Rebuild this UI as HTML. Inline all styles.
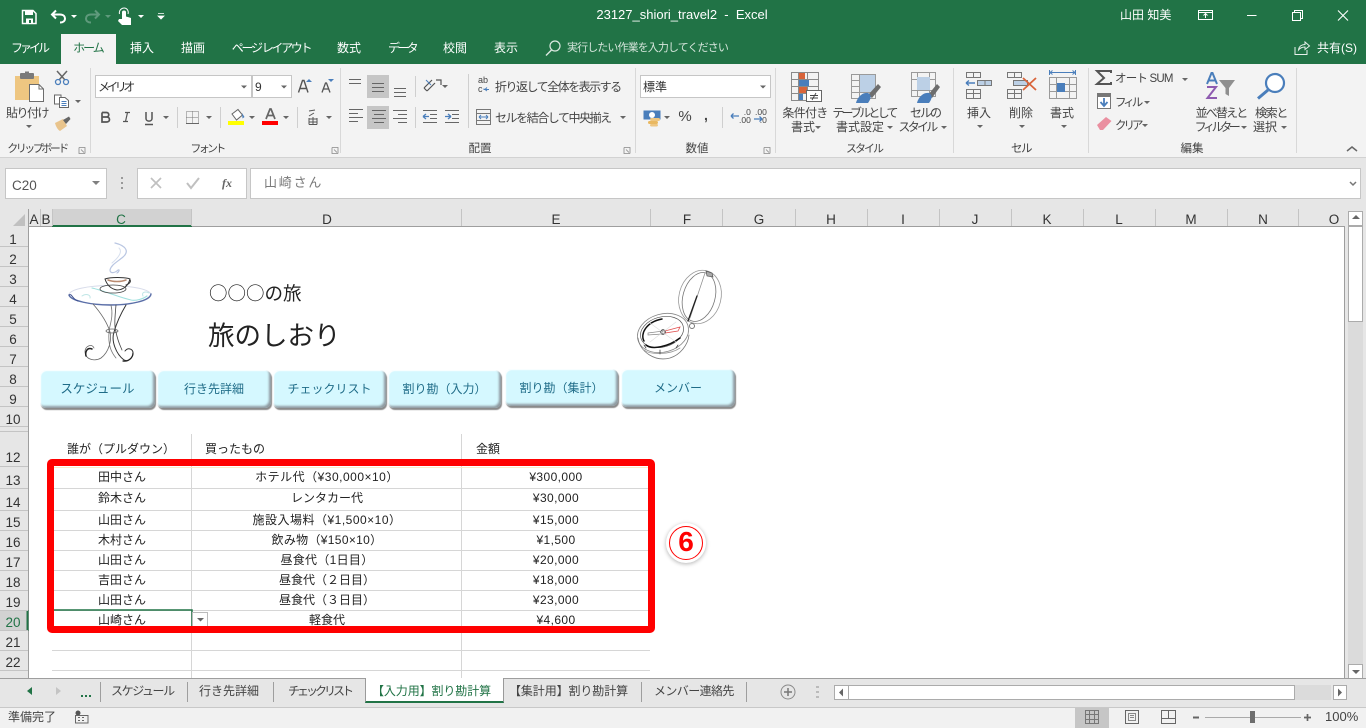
<!DOCTYPE html>
<html lang="ja"><head><meta charset="utf-8"><title>23127_shiori_travel2 - Excel</title>
<style>
html,body{margin:0;padding:0;width:1366px;height:728px;overflow:hidden;background:#fff}
body{position:relative;font-family:"Liberation Sans","Noto Sans CJK JP",sans-serif;font-size:12px;color:#444}
div{position:absolute;box-sizing:border-box}
.t{position:absolute;white-space:nowrap;line-height:16px;height:16px}
.c{position:absolute;white-space:nowrap;line-height:16px;height:16px;width:240px;margin-left:-120px;text-align:center}
.w{color:#fff}
.g{color:#444}
.d{color:#222}
.n{letter-spacing:.4px}
.h{font-size:13.5px;color:#333;font-family:"Liberation Sans",sans-serif}
.rb{background:#d5f8ff;border-radius:6px;color:#1f6c88;font-size:12.5px;text-align:center;line-height:38px;
box-shadow:inset 1px 1px 1px #fff,inset -2px -2px 2px #8f9aa0,1px 2px 1px #8a8a8a;}
.btn{border:1px solid #c6c6c6;background:#fff}
</style></head><body>

<!-- backgrounds -->
<div style="left:0;top:0;width:1366px;height:64px;background:#217346"></div>
<div style="left:61px;top:34px;width:55px;height:30px;background:#f3f3f3"></div>
<div style="left:0;top:64px;width:1366px;height:93px;background:#f3f3f3"></div>
<div style="left:0;top:157px;width:1366px;height:52px;background:#e6e6e6;border-top:1px solid #d2d2d2"></div>
<div class="btn" style="left:5px;top:168px;width:102px;height:31px"></div>
<div class="btn" style="left:137px;top:168px;width:110px;height:31px"></div>
<div class="btn" style="left:250px;top:168px;width:1111px;height:31px"></div>

<!-- sheet chrome -->
<div style="left:0;top:209px;width:1366px;height:18px;background:#e6e6e6"></div>
<div style="left:0;top:209px;width:29px;height:470px;background:#e6e6e6"></div>
<div style="left:1345px;top:209px;width:21px;height:470px;background:#e6e6e6"></div>
<div style="left:52px;top:209px;width:140px;height:18px;background:#d2d2d2"></div>
<div style="left:0;top:610px;width:28px;height:21px;background:#d2d2d2"></div>
<div style="left:0;top:678px;width:1366px;height:30px;background:#e6e6e6"></div>
<div style="left:0;top:708px;width:1366px;height:20px;background:#f1f1f1"></div>
<div style="left:1075px;top:707px;width:34px;height:21px;background:#c6c6c6"></div>

<!-- inputs in ribbon -->
<div style="left:95px;top:75px;width:157px;height:23px;background:#fff;border:1px solid #c6c6c6"></div>
<div style="left:252px;top:75px;width:40px;height:23px;background:#fff;border:1px solid #c6c6c6"></div>
<div style="left:640px;top:75px;width:131px;height:23px;background:#fff;border:1px solid #c6c6c6"></div>
<div style="left:367px;top:75px;width:22px;height:23px;background:#c6c6c6"></div>
<div style="left:367px;top:106px;width:22px;height:23px;background:#c6c6c6"></div>

<!-- scrollbars -->
<div style="left:1348px;top:211px;width:15px;height:467px;background:#dbdbdb"></div>
<div class="btn" style="left:1348px;top:211px;width:15px;height:15px;border-color:#ababab"></div>
<div class="btn" style="left:1348px;top:226px;width:15px;height:96px;border-color:#ababab"></div>
<div class="btn" style="left:1348px;top:664px;width:15px;height:15px;border-color:#ababab"></div>
<div style="left:849px;top:685px;width:482px;height:15px;background:#dbdbdb"></div>
<div class="btn" style="left:834px;top:685px;width:15px;height:15px;border-color:#ababab"></div>
<div class="btn" style="left:848px;top:685px;width:447px;height:15px;border-color:#ababab"></div>
<div class="btn" style="left:1333px;top:685px;width:14px;height:15px;border-color:#ababab"></div>

<!-- active sheet tab -->
<div style="left:365px;top:678px;width:139px;height:25px;background:#fff;border:1px solid #9a9a9a;border-top:0;border-bottom:2px solid #217346"></div>

<!-- main svg -->
<svg width="1366" height="728" viewBox="0 0 1366 728" style="position:absolute;left:0;top:0" fill="none">
<!-- header edges -->
<path d="M29 226.5H1345M28.5 209V679M1344.5 226V679M0 678.5H365M504 678.5H1366" stroke="#9e9e9e"/>
<path d="M0 707.5H1366" stroke="#c8c8c8"/>
<path d="M52 226H192" stroke="#217346" stroke-width="2"/>
<path d="M27.5 610V631" stroke="#217346" stroke-width="2"/>
<path d="M40.5 209V226M52.5 209V226M191.5 209V226M461.5 209V226M650.5 209V226M722.5 209V226M795.5 209V226M867.5 209V226M939.5 209V226M1011.5 209V226M1083.5 209V226M1155.5 209V226M1227.5 209V226M1298.5 209V226" stroke="#c4c4c4"/>
<path d="M25 214V226H13z" fill="#c0c0c0"/>
<path d="M0 246.5H28M0 266.5H28M0 286.5H28M0 306.5H28M0 326.5H28M0 346.5H28M0 366.5H28M0 386.5H28M0 406.5H28M0 426.5H28M0 431.5H28M0 466.5H28M0 488.5H28M0 510.5H28M0 530.5H28M0 550.5H28M0 570.5H28M0 590.5H28M0 610.5H28M0 630.5H28M0 650.5H28M0 670.5H28" stroke="#c4c4c4"/>
<!-- grid -->
<path d="M52 488.5H650M52 510.5H650M52 530.5H650M52 550.5H650M52 570.5H650M52 590.5H650M52 610.5H650M52 630.5H650M52 650.5H650M52 670.5H650" stroke="#d6d6d6"/>
<path d="M191.5 434V678M461.5 434V678" stroke="#d6d6d6"/>
<path d="M52 467.5H650" stroke="#fde9c9"/>
<path d="M52 610H192V631M52 610" stroke="#217346" stroke-width="1.5"/>
<rect x="192.500" y="612.500" width="15" height="14" fill="#fff" stroke="#bbb"/>
<path d="M197 618h7l-3.500 3.500z" fill="#666"/>

<!-- ribbon group separators -->
<path d="M90.500 68V153M340.500 68V153M635.500 68V153M775.500 68V153M953.500 68V153M1088.500 68V153M1296.500 68V153" stroke="#d8d8d8"/>
<path d="M177.500 107V128M220.500 107V128M297.500 107V128M415.500 76V97M415.500 107V128M468.500 74V128M722.500 107V128" stroke="#cfcfcf"/>
<path d="M0 157.500H1366" stroke="#d2d2d2"/>

<!-- dropdown triangles -->
<path d="M71 15h6l-3 3zM138 15h6l-3 3z" fill="#fff"/>
<path d="M105 15h6l-3 3z" fill="#5f9a7c"/>
<path d="M241 85.500h6l-3 3zM281 85.500h6l-3 3zM26 125h6l-3 3zM75 100h6l-3 3zM163 116h6l-3 3zM206 116h6l-3 3zM249 116h6l-3 3zM283 116h6l-3 3zM326 116h6l-3 3zM442 85h6l-3 3zM620 116h6l-3 3zM760 85.500h6l-3 3zM664 116h6l-3 3zM815 126h6l-3 3zM887 126h6l-3 3zM941 126h6l-3 3zM977 125h6l-3 3zM1019 125h6l-3 3zM1061 125h6l-3 3zM1182 78h6l-3 3zM1144 101h6l-3 3zM1142 124h6l-3 3zM1241 126h6l-3 3zM1281 126h6l-3 3z" fill="#666"/>
<path d="M92 181h8l-4 4z" fill="#808080"/>

<!-- quick access -->
<path d="M22.500 10.500H33L36 13.500V23.500H22.500Z" stroke="#fff" stroke-width="1.500"/>
<rect x="25" y="11" width="8" height="4" fill="#fff"/><rect x="26" y="18.500" width="7" height="5" fill="#fff"/><rect x="29" y="20" width="2" height="3" fill="#217346"/>
<path d="M56 10.500L52 14.500L56 18.500M52.500 14.500H60C64 14.500 65 17 65 18.500C65 21 63 22.500 60 22.500" stroke="#fff" stroke-width="2"/>
<path d="M95 10.500L99 14.500L95 18.500M98.500 14.500H91C87 14.500 86 17 86 18.500C86 21 88 22.500 91 22.500" stroke="#5f9a7c" stroke-width="2"/>
<path d="M122 12V19L119 19L118 21L122 25H131V18L126 16.500V12C126 10 122 10 122 12Z" fill="#fff"/><path d="M119.500 14C118.500 10 122 8 124 8C127 8 129 11 128 14" stroke="#fff"/>
<path d="M158 13.500h6M158 16h6l-3 3z" stroke="#fff" stroke-width=".8" fill="#fff"/>
<!-- window controls -->
<path d="M1198.500 10.500H1212.500V19.500H1198.500ZM1198.500 12.500H1212.500M1205.500 18V14M1203.500 15.500L1205.500 13.500L1207.500 15.500" stroke="#fff"/>
<path d="M1247 15.500H1256.500" stroke="#fff"/>
<path d="M1292.500 12.500H1300.500V20.500H1292.500ZM1294.500 12V10.500H1302.500V18.500H1301" stroke="#fff"/>
<path d="M1338 10.500L1348 20.500M1348 10.500L1338 20.500" stroke="#fff" stroke-width="1.100"/>
<!-- tell me / share -->
<circle cx="555" cy="46" r="5" stroke="#dbe8e0" stroke-width="1.200"/><path d="M551.500 50L546 55.500" stroke="#dbe8e0" stroke-width="1.400"/>
<path d="M1295 47V54.500H1307V50M1298.500 50C1299 46 1302 44.500 1305 44.500V42L1309.500 46L1305 49.500V47C1302 47 1300 48 1298.500 50Z" stroke="#e8f0ec"/>

<!-- clipboard -->
<path d="M15 76H39V100H15Z" fill="#eec681"/><rect x="20" y="73" width="14" height="6" rx="1" fill="#7a7a7a"/><rect x="25" y="71.500" width="4" height="3" fill="#7a7a7a"/>
<path d="M29.500 84.500H39L43.500 89V101.500H29.500Z" fill="#fff" stroke="#6d6d6d"/>
<path d="M39 85V89H43.500" stroke="#6d6d6d"/>
<path d="M57 71L65 80M67 71L59 80" stroke="#666" stroke-width="1.500"/><circle cx="58" cy="82" r="2.500" stroke="#4a7ebb" stroke-width="1.300"/><circle cx="66" cy="82" r="2.500" stroke="#4a7ebb" stroke-width="1.300"/>
<path d="M54.500 95H61V104H54.500Z" fill="#fff" stroke="#666"/><path d="M59.500 97.500H65L68.500 100.500V107.500H59.500Z" fill="#fff" stroke="#666"/><path d="M61.500 101.500H66.500M61.500 103.500H66.500M61.500 105.500H66.500" stroke="#4a7ebb"/>
<path d="M55 123L63 119L67 126L60 131C58 130 56 127 55 123Z" fill="#e9c48c"/><path d="M63 120L69 116.500L70.500 119L66 124Z" fill="#666"/>

<!-- font group -->
<path d="M298.500 92.500L302.500 80.500H304L308 92.500M300 88.500H306.500" stroke="#555" stroke-width="1.400"/><path d="M306 82h6l-3-3z" fill="#4a7ebb"/>
<path d="M322 92.500L325.500 83H326.500L330 92.500M323.500 89H328.500" stroke="#555" stroke-width="1.300"/><path d="M328 79h6l-3 3z" fill="#4a7ebb"/>
<path d="M102 112.500H106.500C109.500 112.500 109.500 117 106.500 117H102.500M106.500 117C110.500 117 110.500 122 106.500 122H102V112.500" stroke="#555" stroke-width="1.700"/>
<path d="M125 112.500H130M127.500 112.500L125.500 121.500M123 121.500H128" stroke="#555" stroke-width="1.200"/>
<path d="M146 112V118.500C146 122 152 122 152 118.500V112M145 124.500H153" stroke="#555" stroke-width="1.500"/>
<path d="M186.500 111.500H198.500V123.500H186.500ZM192.500 111.500V123.500M186.500 117.500H198.500" stroke="#777" stroke-dasharray="1 1"/><path d="M186 123.500H199" stroke="#666"/>
<path d="M232 114L238 109.500L242.500 115L236.500 120Z" fill="#fff" stroke="#666"/><path d="M242 113L244.500 117L242.500 118.500Z" fill="#4a7ebb"/>
<rect x="228" y="121" width="16" height="4" fill="#ffff00"/>
<path d="M266 119L270 109H271L275 119M267.500 115.500H273.500" stroke="#666" stroke-width="1.700"/>
<rect x="262" y="121" width="16" height="4" fill="#f00"/>
<path d="M309 111L315 110M314 113L309 116M313 117V124.500M309 119H317M309 122H317M309 124.500H317M309 118V124.500M317 118V124.500" stroke="#555"/>

<!-- alignment -->
<path d="M349 79.500H361M349 83.500H361M372 83.500H384M372 87.500H384M372 91.500H384M394 88.500H406M394 92.500H406M394 96.500H406" stroke="#666"/>
<path d="M349 109.500H363M349 113.500H358M349 117.500H363M349 121.500H358M372 110.500H386M374 114.500H384M372 118.500H386M374 122.500H384M393 110.500H407M398 114.500H407M393 118.500H407M398 122.500H407" stroke="#666"/>
<path d="M424 88L432 80M427 91L435 83M424 88L427 91M436 80L441 80V85" stroke="#555" stroke-width="1.200"/><path d="M426 80L431 85" stroke="#4a7ebb"/>
<path d="M423 110.500H437M430 114.500H437M430 118.500H437M423 122.500H437" stroke="#666"/><path d="M423 116.500H429M423 116.500L426 114M423 116.500L426 119" stroke="#4a7ebb" stroke-width="1.300"/>
<path d="M445 110.500H459M452 114.500H459M452 118.500H459M445 122.500H459" stroke="#666"/><path d="M445 116.500H451M451 116.500L448 114M451 116.500L448 119" stroke="#4a7ebb" stroke-width="1.300"/>
<path d="M476.500 109.500H490.500V124.500H476.500ZM476.500 113.500H490.500M476.500 120.500H490.500" stroke="#777"/><path d="M479 117H488M479 117L481 115M479 117L481 119M488 117L486 115M488 117L486 119" stroke="#4a7ebb"/>
<path d="M484 89.500V90.500H489M487 88.500L485 90.500L487 92" stroke="#4a7ebb" transform="translate(0,-1)"/>

<!-- number -->
<path d="M643.500 110.500H660.500V119.500H643.500Z" fill="#4a7ebb"/><circle cx="652" cy="115" r="3" fill="#fff"/>
<rect x="650" y="118" width="10" height="3" rx="1.500" fill="#eec681"/><rect x="648" y="121" width="10" height="3" rx="1.500" fill="#e9b860"/><rect x="650" y="124" width="8" height="2.500" rx="1.200" fill="#eec681"/>
<path d="M731 116H739M731 116L733.500 113.500M731 116L733.500 118.500M754 119H762M762 119L759.500 116.500M762 119L759.500 121.500" stroke="#4a7ebb" stroke-width="1.300"/>

<!-- styles -->
<path d="M791.500 72.500H818.500V100.500H791.500ZM798.500 72.500V100.500M807.500 72.500V100.500M791.500 79.500H818.500M791.500 86.500H818.500M791.500 93.500H818.500" stroke="#8a8a8a"/>
<rect x="799" y="73" width="6" height="6" fill="#d9643a"/><rect x="799" y="80" width="10" height="6" fill="#4a7ebb"/><rect x="799" y="87" width="8" height="6" fill="#d9643a"/><rect x="799" y="94" width="4" height="6" fill="#4a7ebb"/>
<rect x="806.500" y="90.500" width="15" height="11" fill="#fff" stroke="#666"/><path d="M810 95.500H818M810 98H818M816 93L812 100" stroke="#444" stroke-width=".9"/>
<path d="M851.500 74.500H875.500V98.500H851.500ZM859.500 74.500V98.500M867.500 74.500V98.500M851.500 80.500H875.500M851.500 86.500H875.500M851.500 92.500H875.500" stroke="#9a9a9a"/>
<rect x="860" y="75" width="15" height="17" fill="#bcd0e6"/>
<path d="M868 95L878 84L881 87L872 98Z" fill="#6d6d6d"/><path d="M856 103C857 98 862 92 868 93C872 95 871 99 868 103Z" fill="#4a7ebb"/>
<path d="M911.500 72.500H935.500V96.500H911.500ZM911.500 79.500H935.500M911.500 90.500H935.500M917.500 72.500V96.500M929.500 72.500V96.500" stroke="#9a9a9a"/>
<rect x="917" y="77" width="13" height="13" fill="#bcd0e6"/>
<path d="M928 95L937 84L940 87L932 98Z" fill="#6d6d6d"/><path d="M917 103C918 98 923 92 929 93C933 95 932 99 929 103Z" fill="#4a7ebb"/>

<!-- cells -->
<path d="M966.500 72.500H980.500V77.500H966.500ZM973.500 72.500V77.500M966.500 89.500H980.500V98.500H966.500ZM973.500 89.500V98.500M966.500 93.500H980.500" stroke="#777"/>
<rect x="977.500" y="80.500" width="14" height="5" fill="#bcd0e6" stroke="#777"/><path d="M985 80.500V85.500" stroke="#777"/>
<path d="M966 83H975M966 83L969 80.500M966 83L969 85.500" stroke="#4a7ebb" stroke-width="1.400"/>
<path d="M1007.500 72.500H1021.500V77.500H1007.500ZM1014.500 72.500V77.500M1007.500 89.500H1021.500V98.500H1007.500ZM1014.500 89.500V98.500M1007.500 93.500H1021.500" stroke="#777"/>
<rect x="1013.500" y="80.500" width="14" height="5" fill="#bcd0e6" stroke="#777"/>
<path d="M1023 78L1036 90M1036 78L1023 90" stroke="#d9643a" stroke-width="1.800"/>
<path d="M1049.500 77.500H1076.500V98.500H1049.500ZM1056.500 77.500V98.500M1069.500 77.500V98.500M1049.500 84.500H1076.500M1049.500 91.500H1076.500" stroke="#9a9a9a"/>
<rect x="1057" y="83" width="8" height="9" fill="#4a7ebb"/>
<path d="M1050 72.500H1075M1050 72.500L1052.500 70.500M1050 72.500L1052.500 74.500M1075 72.500L1072.500 70.500M1075 72.500L1072.500 74.500M1049.500 70V75M1075.500 70V75" stroke="#4a7ebb"/>

<!-- editing -->
<path d="M1111 73V71H1097L1104 78L1097 84H1111V82" stroke="#555" stroke-width="2"/>
<path d="M1097.500 93.500H1110.500V108.500H1097.500Z" stroke="#777" fill="#fff"/><rect x="1098" y="94" width="12" height="3" fill="#777"/>
<path d="M1104 98V105M1100.500 102L1104 106L1107.500 102" stroke="#4a7ebb" stroke-width="1.800"/>
<path d="M1097 125L1106 117L1111.500 121L1103 130H1100Z" fill="#ea8fa0"/>
<!-- sort -->
<path d="M1207 84L1211.500 73H1212.500L1217 84M1208.500 80.500H1215.500" stroke="#4a7ebb" stroke-width="2"/>
<path d="M1207 87H1216L1207.500 98H1217" stroke="#8e5bb0" stroke-width="2"/>
<path d="M1219 80H1235L1229 88V96L1225.500 94V88Z" fill="#8f8f8f"/>
<circle cx="1275" cy="83" r="9" fill="#fff" stroke="#4a7ebb" stroke-width="2.200"/><path d="M1268 90L1258 98.500" stroke="#4a7ebb" stroke-width="3"/>
<path d="M1347 151L1352 147L1357 151" stroke="#666" stroke-width="1.500"/>
<path d="M79 147.500H85V153.500M79 147.500V153.500H85M81 149.500L84 152.500M332 147.500H338V153.500M332 147.500V153.500H338M334 149.500L337 152.500M624 147.500H630V153.500M624 147.500V153.500H630M626 149.500L629 152.500M764 147.500H770V153.500M764 147.500V153.500H770M766 149.500L769 152.500" stroke="#888" stroke-width=".8"/>

<!-- formula bar -->
<path d="M122 178v2M122 183v2M122 188v2" stroke="#999" stroke-width="2" transform="translate(0,-1)"/>
<path d="M151 178L161 188M161 178L151 188" stroke="#c0c0c0" stroke-width="1.700"/>
<path d="M187 183L191 188L199 178" stroke="#c0c0c0" stroke-width="2"/>
<path d="M1350 182L1353 185L1356 182" stroke="#777" stroke-width="1.500"/>

<!-- scrollbars arrows -->
<path d="M1352 219h8l-4-4z" fill="#666"/>
<path d="M1352 670h8l-4 4z" fill="#666"/>
<path d="M843 688.500v8l-4-4z" fill="#666"/>
<path d="M1338 688.500v8l4-4z" fill="#666"/>

<!-- sheet tab bar -->
<path d="M32 687v8l-5-4z" fill="#217346"/><path d="M56 687v8l5-4z" fill="#c4c4c4"/>
<path d="M81 695h2v2h-2zM85 695h2v2h-2zM89 695h2v2h-2z" fill="#217346"/>
<path d="M100.500 682V702M187.500 682V702M273.500 682V702M641.500 682V702M746.500 682V702" stroke="#9e9e9e"/>
<circle cx="788" cy="692" r="7" stroke="#8a8a8a"/><path d="M784 692H792M788 688V696" stroke="#777" stroke-width="1.500"/>
<path d="M816 686h3v2h-3zM816 691h3v2h-3zM816 696h3v2h-3z" fill="#bbb"/>

<!-- status icons -->
<circle cx="78" cy="713" r="2.500" fill="#555"/><path d="M75.500 715.500H88V723H75.500Z" stroke="#666"/><path d="M78 717.500h2M82 717.500h2M78 720.500h2M82 720.500h2" stroke="#666"/>
<path d="M1085.500 710.500H1098.500V723.500H1085.500ZM1089.500 710.500V723.500M1094.500 710.500V723.500M1085.500 714.500H1098.500M1085.500 719.500H1098.500" stroke="#777"/>
<path d="M1125.500 710.500H1138.500V723.500H1125.500Z" stroke="#666"/><path d="M1128.500 713.500H1135.500V720.500H1128.500ZM1130 715.500H1134M1130 717.500H1134" stroke="#888"/>
<path d="M1161.500 710.500H1175.500V723.500H1161.500ZM1161.500 718.500H1175.500M1168.500 710.500V718.500" stroke="#666"/>
<path d="M1193 717.500H1199" stroke="#666" stroke-width="2"/>
<path d="M1205 717.500H1301" stroke="#aaa"/><rect x="1250" y="711" width="5" height="12" fill="#6d6d6d"/>
<path d="M1304 717.500H1311M1307.500 714V721" stroke="#666" stroke-width="1.700"/>

<!-- table art -->
<g stroke-linecap="round">
<path d="M115 243C127 246 129 252 123 257C117 262 111 265 110 270C110 274 115 273 118 270C120 269 119 272 117 273" stroke="#b9c6e2" stroke-width="1.200"/>
<path d="M119 248C123 252 118 258 112 263" stroke="#d8e0ef"/>
<ellipse cx="110" cy="295" rx="41" ry="9.500" stroke="#d8dcea"/>
<path d="M69 295C71 301 92 305 110 305C130 305 150 301 151 294" stroke="#5b6fa8" stroke-width="1.400"/>
<path d="M69 295C72 293 72 299 78 301" stroke="#3c4f8e"/>
<path d="M92 288C105 291 118 297 131 300C136 301 143 299 147 296" stroke="#9fe0de" stroke-width="1.100"/>
<path d="M82 296C86 293 91 295 90 298M143 296C141 292 146 291 149 293" stroke="#bfe6e6"/>
<path d="M105 279C110 277 125 277 130 279C128 287 122 290 117 290C111 289 107 285 105 279Z" fill="#fff" stroke="#333"/>
<path d="M108 280C113 282 121 282 126 280" stroke="#b98a70" stroke-width="1.500"/>
<path d="M130 280C131 281 130 284 126 285" stroke="#333"/>
<ellipse cx="113" cy="289" rx="13" ry="4" stroke="#444" stroke-width=".8"/>
<path d="M93 304C100 312 107 322 110 332C112 340 109 352 101 358C96 361 86 361 85 352C85 346 92 343 94 348" stroke="#666" stroke-width=".8"/>
<path d="M126 305C120 315 116 325 114 332C111 341 116 354 124 360C128 362 133 358 133 353C133 349 128 347 125 351" stroke="#333" stroke-width="1"/>
<path d="M111 305C114 318 109 326 109 332C108 345 111 352 116 358" stroke="#777" stroke-width=".8"/>
<path d="M116 305C115 316 114 326 116 332C118 342 120 345 122 350" stroke="#444" stroke-width=".8"/>
<path d="M92 349C87 347 85 352 86 356" stroke="#222" stroke-width="1.500"/>
<path d="M123 361C128 362 133 358 133 353" stroke="#222" stroke-width="1.200"/>
<ellipse cx="112" cy="331" rx="6" ry="2" stroke="#666" stroke-width=".8"/>
</g>
<!-- compass -->
<g stroke-linecap="round">
<ellipse cx="700" cy="297" rx="21" ry="27" transform="rotate(14 700 297)" stroke="#999" stroke-width=".8"/>
<ellipse cx="699" cy="297" rx="16" ry="25" transform="rotate(16 699 297)" stroke="#777" stroke-width=".8"/>
<path d="M705 273L690 318" stroke="#888" stroke-width=".7"/><path d="M697 296L688 321" stroke="#222" stroke-width="1.300"/>
<path d="M706 271L712 273L713 277L707 276Z" fill="#aaa" stroke="#555" stroke-width=".7"/>
<ellipse cx="663" cy="333" rx="26" ry="19" transform="rotate(-16 663 333)" stroke="#888" stroke-width=".8"/>
<ellipse cx="662" cy="332" rx="22" ry="15" transform="rotate(-16 662 332)" stroke="#555" stroke-width=".7"/>
<path d="M644 341C640 334 646 322 662 319M646 345C652 350 668 347 680 338" stroke="#111" stroke-width="1.500"/>
<path d="M638 338C640 352 655 362 670 358C680 355 688 345 689 335" stroke="#777" stroke-width=".8"/>
<path d="M644 350C650 355 670 355 680 348" stroke="#999" stroke-width=".8"/>
<path d="M648 333L663 331L662 334L648 335Z" stroke="#888" stroke-width=".7"/>
<path d="M665 331L680 327L678 331L665 333Z" stroke="#e05050" stroke-width=".8"/>
<circle cx="663" cy="332" r="2.200" stroke="#333"/>
<path d="M650 323L676 342M650 342L676 322" stroke="#ddd" stroke-width=".6"/>
<circle cx="692" cy="326" r="2.500" stroke="#777"/>
<path d="M660 350V354M644 345L646 348M678 345L676 348" stroke="#444" stroke-width=".8"/>
</g>
</svg>

<!-- red box & number -->
<div style="left:47px;top:459px;width:608px;height:174px;border:7px solid #f00;border-radius:5px"></div>
<div style="left:666px;top:523px;width:40px;height:40px;border-radius:50%;background:#fff;box-shadow:0 1px 4px rgba(0,0,0,.3)"></div>
<div style="left:669px;top:526px;width:34px;height:34px;border-radius:50%;border:1px solid #f00"></div>
<div class="c" style="left:686px;top:534px;color:#f00;font-size:28px;font-weight:bold;line-height:16px">6</div>

<!-- dashboard buttons -->
<div class="rb" style="left:40px;top:370px;width:115px;height:38px">スケジュール</div>
<div class="rb" style="left:157px;top:370px;width:114px;height:38px;font-size:12px">行き先詳細</div>
<div class="rb" style="left:273px;top:370px;width:113px;height:38px;font-size:12px">チェックリスト</div>
<div class="rb" style="left:388px;top:370px;width:113px;height:38px;font-size:12px">割り勘（入力）</div>
<div class="rb" style="left:505px;top:369px;width:113px;height:37px;font-size:12px">割り勘（集計）</div>
<div class="rb" style="left:621px;top:369px;width:114px;height:38px;font-size:12px">メンバー</div>

<!-- title bar text -->
<span class="c w" style="left:682px;top:7px;font-size:13px">23127_shiori_travel2&nbsp; -&nbsp; Excel</span>
<span class="t w" style="left:1120px;top:7px;font-size:12px">山田 知美</span>
<span class="c w" style="left:29px;top:40px;letter-spacing:-3px">ファイル</span>
<span class="c" style="left:88px;top:40px;letter-spacing:-2px;color:#217346">ホーム</span>
<span class="c w" style="left:142px;top:40px">挿入</span>
<span class="c w" style="left:193px;top:40px">描画</span>
<span class="c w" style="left:271px;top:40px;letter-spacing:-2.300px">ページ レイアウト</span>
<span class="c w" style="left:349px;top:40px">数式</span>
<span class="c w" style="left:402px;top:40px;letter-spacing:-2.700px">データ</span>
<span class="c w" style="left:455px;top:40px">校閲</span>
<span class="c w" style="left:506px;top:40px">表示</span>
<span class="t" style="left:567px;top:40px;color:#d5e5db;font-size:11px;letter-spacing:-.9px">実行したい作業を入力してください</span>
<span class="t w" style="left:1317px;top:40px">共有(S)</span>

<!-- ribbon text -->
<span class="t" style="left:98px;top:79px;color:#333;letter-spacing:-3.600px">メイリオ</span>
<span class="t" style="left:255px;top:79px;color:#333">9</span>
<span class="t" style="left:643px;top:79px;color:#333">標準</span>
<span class="c g" style="left:27px;top:105px;letter-spacing:-1.500px">貼り付け</span>
<span class="c g" style="left:37px;top:141px;font-size:11px;letter-spacing:-2.500px">クリップボード</span>
<span class="c g" style="left:207px;top:141px;font-size:11px;letter-spacing:-2.700px">フォント</span>
<span class="c g" style="left:480px;top:141px;font-size:11.500px">配置</span>
<span class="c g" style="left:697px;top:141px;font-size:11.500px">数値</span>
<span class="c g" style="left:864px;top:141px;font-size:11px;letter-spacing:-2px">スタイル</span>
<span class="c g" style="left:1021px;top:141px;font-size:11.500px;letter-spacing:-1.500px">セル</span>
<span class="c g" style="left:1192px;top:141px;font-size:11.500px">編集</span>
<span class="t g" style="left:478px;top:76px;font-size:9px;line-height:9px;height:20px">ab<br>c</span>
<span class="t g" style="left:495px;top:79px;letter-spacing:-1.500px">折り返して全体を表示する</span>
<span class="t g" style="left:495px;top:110px;letter-spacing:-1.450px">セルを結合して中央揃え</span>
<span class="c g" style="left:685px;top:109px;font-size:15px">%</span>
<span class="c g" style="left:706px;top:107px;font-size:14px;font-weight:bold">,</span>
<span class="t g" style="left:739px;top:108px;font-size:8.500px;line-height:8px;height:18px;text-align:right">.0<br>.00</span>
<span class="t g" style="left:755px;top:108px;font-size:8.500px;line-height:8px;height:18px;text-align:right">.00<br>&nbsp;&nbsp;.0</span>
<span class="c g" style="left:805px;top:105px;letter-spacing:-.7px">条件付き</span>
<span class="c g" style="left:803px;top:119px">書式</span>
<span class="c g" style="left:864px;top:105px;letter-spacing:-2.800px">テーブルとして</span>
<span class="c g" style="left:860px;top:119px">書式設定</span>
<span class="c g" style="left:925px;top:105px;letter-spacing:-2px">セルの</span>
<span class="c g" style="left:917px;top:119px;letter-spacing:-2.700px">スタイル</span>
<span class="c g" style="left:979px;top:105px">挿入</span>
<span class="c g" style="left:1021px;top:105px">削除</span>
<span class="c g" style="left:1062px;top:105px">書式</span>
<span class="t g" style="left:1115px;top:71px;font-size:11.500px;letter-spacing:-.8px">オート SUM</span>
<span class="t g" style="left:1115px;top:95px;font-size:11.500px;letter-spacing:-3px">フィル</span>
<span class="t g" style="left:1115px;top:118px;font-size:11.500px;letter-spacing:-3px">クリア</span>
<span class="c g" style="left:1221px;top:105px;letter-spacing:-1.800px">並べ替えと</span>
<span class="c g" style="left:1216px;top:119px;letter-spacing:-3.400px">フィルター</span>
<span class="c g" style="left:1271px;top:105px;letter-spacing:-1.300px">検索と</span>
<span class="c g" style="left:1265px;top:119px">選択</span>

<!-- formula -->
<span class="t" style="left:12px;top:178px;font-size:13.500px;color:#555;font-family:'Liberation Sans',sans-serif">C20</span>
<span class="t" style="left:222px;top:175px;font-family:'Liberation Serif',serif;font-style:italic;font-weight:bold;font-size:12px;color:#666">fx</span>
<span class="t" style="left:264px;top:175px;color:#7a7a7a;font-size:13px;letter-spacing:1.800px">山崎さん</span>

<!-- column headers -->
<span class="c h" style="left:34px;top:212px">A</span><span class="c h" style="left:46px;top:212px">B</span>
<span class="c h" style="left:121px;top:212px;color:#217346">C</span><span class="c h" style="left:327px;top:212px">D</span>
<span class="c h" style="left:556px;top:212px">E</span><span class="c h" style="left:687px;top:212px">F</span>
<span class="c h" style="left:759px;top:212px">G</span><span class="c h" style="left:831px;top:212px">H</span>
<span class="c h" style="left:903px;top:212px">I</span><span class="c h" style="left:975px;top:212px">J</span>
<span class="c h" style="left:1047px;top:212px">K</span><span class="c h" style="left:1119px;top:212px">L</span>
<span class="c h" style="left:1191px;top:212px">M</span><span class="c h" style="left:1263px;top:212px">N</span>
<span class="c h" style="left:1334px;top:212px">O</span>

<!-- row headers -->
<span class="c h" style="left:13px;top:232px">1</span><span class="c h" style="left:13px;top:252px">2</span>
<span class="c h" style="left:13px;top:272px">3</span><span class="c h" style="left:13px;top:292px">4</span>
<span class="c h" style="left:13px;top:312px">5</span><span class="c h" style="left:13px;top:332px">6</span>
<span class="c h" style="left:13px;top:352px">7</span><span class="c h" style="left:13px;top:372px">8</span>
<span class="c h" style="left:13px;top:392px">9</span><span class="c h" style="left:13px;top:412px">10</span>
<span class="c h" style="left:13px;top:450px">12</span><span class="c h" style="left:13px;top:473px">13</span>
<span class="c h" style="left:13px;top:495px">14</span><span class="c h" style="left:13px;top:515px">15</span>
<span class="c h" style="left:13px;top:535px">16</span><span class="c h" style="left:13px;top:555px">17</span>
<span class="c h" style="left:13px;top:575px">18</span><span class="c h" style="left:13px;top:595px">19</span>
<span class="c h" style="left:13px;top:615px;color:#217346">20</span><span class="c h" style="left:13px;top:635px">21</span>
<span class="c h" style="left:13px;top:655px">22</span>

<!-- title -->
<span class="t" style="left:209px;top:285px;font-size:18.500px;color:#222;font-family:'Noto Sans CJK JP',sans-serif">○○○の旅</span>
<span class="t" style="left:208px;top:328px;font-size:26.500px;color:#222">旅のしおり</span>

<!-- table -->
<span class="t d" style="left:67px;top:441px">誰が（プルダウン）</span>
<span class="t d" style="left:205px;top:441px">買ったもの</span>
<span class="t d" style="left:476px;top:441px">金額</span>

<span class="c d" style="left:122px;top:469px">田中さん</span><span class="c d" style="left:327px;top:469px;letter-spacing:.5px">ホテル代（¥30,000×10）</span><span class="c d n" style="left:556px;top:469px">¥300,000</span>
<span class="c d" style="left:122px;top:490px">鈴木さん</span><span class="c d" style="left:327px;top:490px">レンタカー代</span><span class="c d n" style="left:556px;top:490px">¥30,000</span>
<span class="c d" style="left:122px;top:512px">山田さん</span><span class="c d" style="left:327px;top:512px;letter-spacing:.5px">施設入場料（¥1,500×10）</span><span class="c d n" style="left:556px;top:512px">¥15,000</span>
<span class="c d" style="left:122px;top:532px">木村さん</span><span class="c d" style="left:327px;top:532px;letter-spacing:.33px">飲み物（¥150×10）</span><span class="c d n" style="left:556px;top:532px">¥1,500</span>
<span class="c d" style="left:122px;top:552px">山田さん</span><span class="c d" style="left:327px;top:552px;letter-spacing:.3px">昼食代（1日目）</span><span class="c d n" style="left:556px;top:552px">¥20,000</span>
<span class="c d" style="left:122px;top:572px">吉田さん</span><span class="c d" style="left:327px;top:572px">昼食代（２日目）</span><span class="c d n" style="left:556px;top:572px">¥18,000</span>
<span class="c d" style="left:122px;top:592px">山田さん</span><span class="c d" style="left:327px;top:592px">昼食代（３日目）</span><span class="c d n" style="left:556px;top:592px">¥23,000</span>
<span class="c d" style="left:122px;top:612px">山崎さん</span><span class="c d" style="left:327px;top:612px">軽食代</span><span class="c d n" style="left:556px;top:612px">¥4,600</span>

<!-- sheet tabs -->
<span class="t g" style="left:111px;top:683px;letter-spacing:-1.400px">スケジュール</span>
<span class="t g" style="left:199px;top:683px">行き先詳細</span>
<span class="t g" style="left:288px;top:683px;letter-spacing:-3px">チェックリスト</span>
<span class="t" style="left:372px;top:683px;color:#217346;letter-spacing:-.1px">【入力用】割り勘計算</span>
<span class="t g" style="left:509px;top:683px;letter-spacing:-.1px">【集計用】割り勘計算</span>
<span class="t g" style="left:654px;top:683px;letter-spacing:-.6px">メンバー連絡先</span>

<!-- status -->
<span class="t g" style="left:8px;top:709px">準備完了</span>
<span class="t g" style="left:1325px;top:709px;font-size:13px">100%</span>

</body></html>
